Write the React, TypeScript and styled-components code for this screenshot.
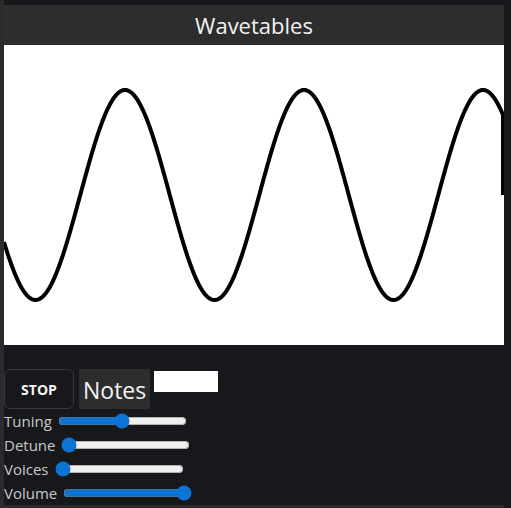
import { useMemo } from 'react';
import styled, { createGlobalStyle } from 'styled-components';

const GlobalStyle = createGlobalStyle`
  html, body {
    margin: 0;
    padding: 0;
    background: #17181c;
    font-family: "Open Sans", "Noto Sans", sans-serif;
  }
`;

const Frame = styled.div`
  width: 504px;
  height: 508px;
  box-sizing: border-box;
  padding: 0 0 3px 4px;
  background: #2b2b2b;
  display: flex;
`;

const Panel = styled.div`
  flex: 1;
  background: #17181c;
  padding-top: 5px;
  display: flex;
  flex-direction: column;
`;

const Header = styled.h1`
  margin: 0;
  height: 40px;
  background: #2d2d2d;
  color: #f2f2f2;
  font-weight: 400;
  font-size: 22px;
  line-height: 40px;
  text-align: center;
`;

const Screen = styled.svg`
  display: block;
  width: 500px;
  height: 300px;
  background: #ffffff;
`;

const Controls = styled.div`
  margin-top: 24px;
  display: flex;
  flex-direction: column;
`;

const TopRow = styled.div`
  display: flex;
  align-items: flex-start;
  gap: 4px;
  height: 40px;
`;

const StopButton = styled.button`
  width: 70px;
  height: 40px;
  margin-right: 1px;
  background: #17181c;
  color: #f4f4f4;
  border: 1px solid #38393d;
  border-radius: 6px;
  font-family: "Open Sans", sans-serif;
  font-weight: 700;
  font-size: 14px;
  cursor: pointer;
`;

const NotesLabel = styled.div`
  height: 40px;
  padding: 0 4px;
  background: #2d2d2d;
  color: #f4f4f4;
  font-size: 23px;
  line-height: 42px;
`;

const NotesInput = styled.input`
  width: 64px;
  height: 21px;
  margin-top: 2px;
  box-sizing: border-box;
  border: none;
  background: #ffffff;
`;

const SliderRow = styled.label`
  display: flex;
  align-items: center;
  height: 24px;
  color: #c9c9c9;
  font-size: 15px;
  gap: 4px;
`;

const Range = styled.input`
  width: 129px;
  margin: 2px;
  accent-color: #0b74d5;
`;

const W = 500;
const H = 300;

const sliders = [
  { name: 'Tuning', value: 50 },
  { name: 'Detune', value: 0 },
  { name: 'Voices', value: 0 },
  { name: 'Volume', value: 100 },
];

export default function App() {
  const wave = useMemo(() => {
    const period = 179;
    const phase = 76.25;
    let d = '';
    for (let x = 0; x <= 499; x++) {
      const y = H / 2 - 105 * Math.sin((2 * Math.PI * (x - phase)) / period);
      d += `${x === 0 ? 'M' : 'L'}${x} ${y.toFixed(2)} `;
    }
    d += `L499 ${H / 2}`;
    return d;
  }, []);

  return (
    <>
      <GlobalStyle />
      <Frame>
        <Panel>
          <Header>Wavetables</Header>
          <Screen viewBox={`0 0 ${W} ${H}`}>
            <path d={wave} fill="none" stroke="#000" strokeWidth={4} strokeLinejoin="round" />
          </Screen>
          <Controls>
            <TopRow>
              <StopButton>STOP</StopButton>
              <NotesLabel>Notes</NotesLabel>
              <NotesInput type="text" />
            </TopRow>
            {sliders.map((s) => (
              <SliderRow key={s.name}>
                {s.name}
                <Range type="range" min={0} max={100} defaultValue={s.value} />
              </SliderRow>
            ))}
          </Controls>
        </Panel>
      </Frame>
    </>
  );
}
